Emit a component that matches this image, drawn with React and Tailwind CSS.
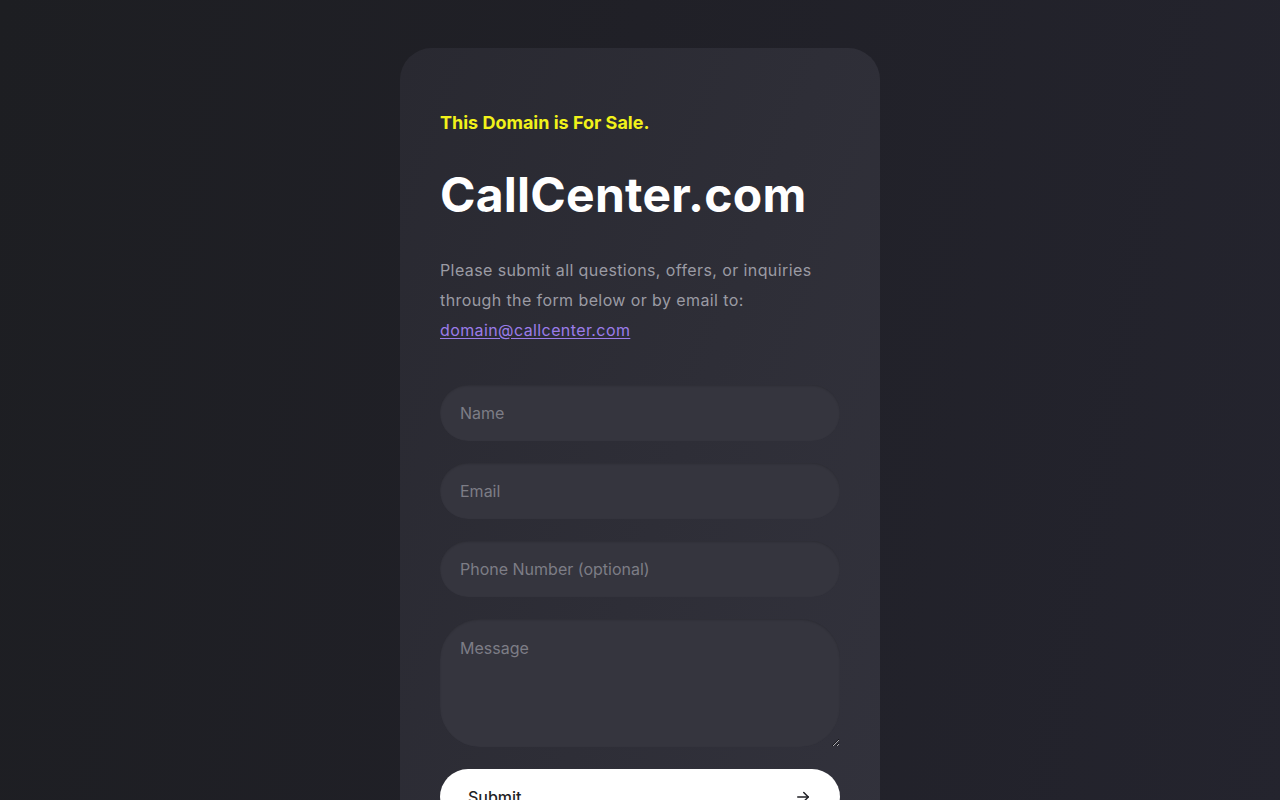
import React from "react";

export default function App() {
  return (
    <div
      className="min-h-screen w-full bg-[linear-gradient(100deg,#1d1e22_0%,#202027_45%,#24242e_100%)] flex justify-center pt-12"
      style={{ fontFamily: "Inter, 'Noto Sans', sans-serif" }}
    >
      <div className="w-[480px] rounded-t-[32px] bg-[linear-gradient(110deg,#292931_0%,#2e2e37_55%,#32323c_100%)] px-10 pt-[61px] pb-10 flex flex-col">
        <p className="text-[18px] leading-7 font-bold text-[#f2f21a]">This Domain is For Sale.</p>
        <h1 className="mt-[34px] text-[48px] leading-none font-bold text-white tracking-[0.005em]">CallCenter.com</h1>
        <p className="mt-[36px] text-[16px] leading-[30px] tracking-[0.025em] text-[#9b9ba4]">
          Please submit all questions, offers, or inquiries through the form below or by email to:{" "}
          <a href="#" className="text-[#9b7ce9] underline underline-offset-2">domain@callcenter.com</a>
        </p>
        <form className="mt-10 flex flex-col gap-[22px]" onSubmit={(e) => e.preventDefault()}>
          <input
            placeholder="Name"
            className="block h-14 w-full rounded-full bg-[#35353e] px-5 text-[16px] text-white placeholder:text-[#7d7d86] outline-none shadow-[inset_0_1px_2px_rgba(0,0,0,0.15)]"
          />
          <input
            placeholder="Email"
            className="block h-14 w-full rounded-full bg-[#35353e] px-5 text-[16px] text-white placeholder:text-[#7d7d86] outline-none shadow-[inset_0_1px_2px_rgba(0,0,0,0.15)]"
          />
          <input
            placeholder="Phone Number (optional)"
            className="block h-14 w-full rounded-full bg-[#35353e] px-5 text-[16px] text-white placeholder:text-[#7d7d86] outline-none shadow-[inset_0_1px_2px_rgba(0,0,0,0.15)]"
          />
          <textarea
            placeholder="Message"
            className="block h-32 w-full rounded-[40px] bg-[#35353e] px-5 py-[17px] text-[16px] leading-6 text-white placeholder:text-[#7d7d86] outline-none shadow-[inset_0_1px_2px_rgba(0,0,0,0.15)]"
          />
          <button
            type="submit"
            className="h-14 w-full rounded-[32px] bg-white pl-7 pr-7 flex items-center justify-between text-[16px] font-medium text-[#1f1f25]"
          >
            <span>Submit</span>
            <svg width="18" height="18" viewBox="0 0 24 24" fill="none" stroke="currentColor" strokeWidth="2" strokeLinecap="round" strokeLinejoin="round">
              <path d="M5 12h14" />
              <path d="M13 6l6 6-6 6" />
            </svg>
          </button>
        </form>
      </div>
    </div>
  );
}
